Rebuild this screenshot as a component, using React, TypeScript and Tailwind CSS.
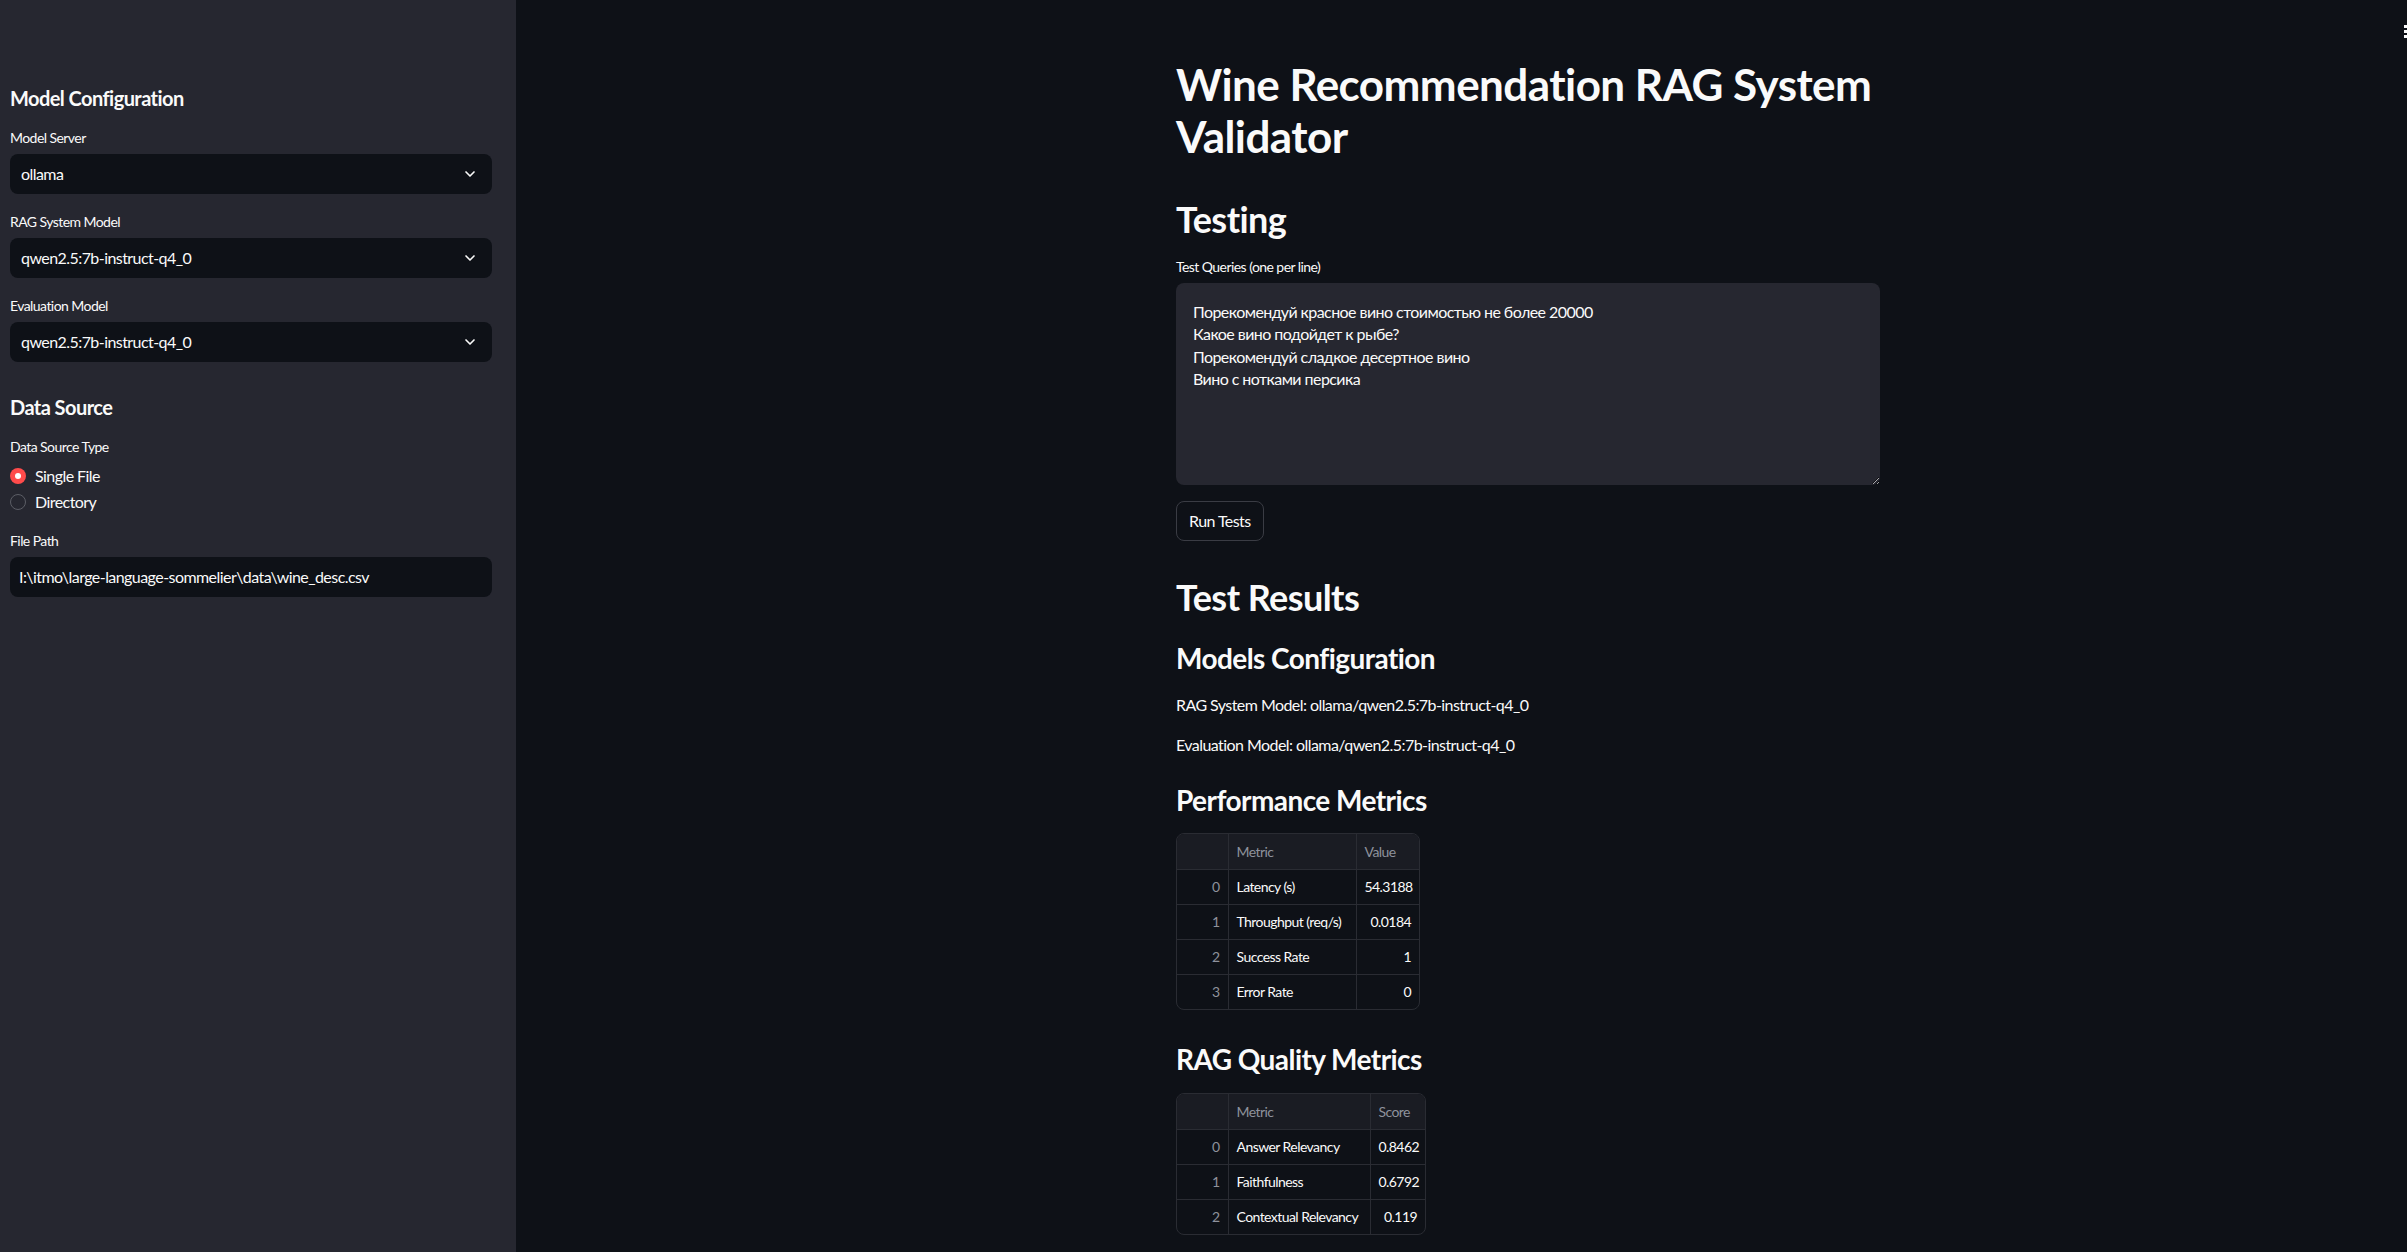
import { ChevronDown } from "lucide-react";

const QUERIES = [
  "Порекомендуй красное вино стоимостью не более 20000",
  "Какое вино подойдет к рыбе?",
  "Порекомендуй сладкое десертное вино",
  "Вино с нотками персика",
].join("\n");

const PERF = [
  ["Latency (s)", "54.3188"],
  ["Throughput (req/s)", "0.0184"],
  ["Success Rate", "1"],
  ["Error Rate", "0"],
];

const QUALITY = [
  ["Answer Relevancy", "0.8462"],
  ["Faithfulness", "0.6792"],
  ["Contextual Relevancy", "0.119"],
];

function Select({ label, value, first }: { label: string; value: string; first?: boolean }) {
  return (
    <div className={first ? "mt-4" : "mt-[18px]"}>
      <div className="text-[14px] leading-[20px] text-[#fafafa]">{label}</div>
      <div className="mt-[6px] flex h-[40px] items-center justify-between rounded-lg bg-[#0e1117] pl-[11px] pr-[14px]">
        <span className="text-[16px] text-[#fafafa]">{value}</span>
        <ChevronDown size={16} strokeWidth={2.5} className="text-[#fafafa]" />
      </div>
    </div>
  );
}

function DataTable({ head, rows, widths }: { head: string; rows: string[][]; widths: [number, number, number] }) {
  return (
    <div className="inline-block overflow-hidden rounded-lg border border-[#2a2c33]">
      <table className="table-fixed border-collapse text-[14px]" style={{ width: widths[0] + widths[1] + widths[2] }}>
        <colgroup>
          <col style={{ width: widths[0] }} />
          <col style={{ width: widths[1] }} />
          <col style={{ width: widths[2] }} />
        </colgroup>
        <thead>
          <tr className="h-[35px] bg-[#1a1c23]">
            <th className="border-r border-[#2a2c33]" />
            <th className="border-r border-[#2a2c33] px-2 text-left font-normal text-[#8e929c]">Metric</th>
            <th className="px-2 text-left font-normal text-[#8e929c]">{head}</th>
          </tr>
        </thead>
        <tbody>
          {rows.map((r, i) => (
            <tr key={r[0]} className="h-[35px] border-t border-[#2a2c33]">
              <td className="border-r border-[#2a2c33] px-2 text-right text-[#8e929c]">{i}</td>
              <td className="whitespace-nowrap border-r border-[#2a2c33] px-2 text-[#fafafa]">{r[0]}</td>
              <td className="whitespace-nowrap px-2 text-right text-[#fafafa]">{r[1]}</td>
            </tr>
          ))}
        </tbody>
      </table>
    </div>
  );
}

export default function App() {
  return (
    <div className="relative flex min-h-[1252px] overflow-hidden bg-[#0e1117] font-[Lato,sans-serif] tracking-[-0.035em] text-[#fafafa]">
      {/* Sidebar */}
      <aside className="w-[516px] shrink-0 bg-[#262730] pl-[10px] pr-[24px] pt-[84px]">
        <h2 className="text-[20px] font-bold leading-[28px]">Model Configuration</h2>
        <Select first label="Model Server" value="ollama" />
        <Select label="RAG System Model" value="qwen2.5:7b-instruct-q4_0" />
        <Select label="Evaluation Model" value="qwen2.5:7b-instruct-q4_0" />

        <h2 className="mt-[31px] text-[20px] font-bold leading-[28px]">Data Source</h2>
        <div className="mt-4 text-[14px] leading-[20px]">Data Source Type</div>
        <div className="mt-[6px]">
          <div className="flex h-[26px] items-center gap-[9px]">
            <span className="flex h-4 w-4 items-center justify-center rounded-full bg-[#ff4b4b]">
              <span className="h-[6px] w-[6px] rounded-full bg-white" />
            </span>
            <span className="text-[16px]">Single File</span>
          </div>
          <div className="flex h-[26px] items-center gap-[9px]">
            <span className="h-4 w-4 rounded-full border border-[#5c5e66]" />
            <span className="text-[16px]">Directory</span>
          </div>
        </div>
        <div className="mt-4 text-[14px] leading-[20px]">File Path</div>
        <div className="mt-[6px] flex h-[40px] items-center rounded-lg bg-[#0e1117] pl-[9px]">
          <span className="text-[16px]">I:\itmo\large-language-sommelier\data\wine_desc.csv</span>
        </div>
      </aside>

      {/* Main */}
      <main className="flex-1 pl-[660px] pt-[58px]">
        <div className="w-[704px]">
          <h1 className="text-[44px] font-bold leading-[52px]">Wine Recommendation RAG System Validator</h1>

          <h2 className="mt-[35px] text-[36px] font-bold leading-[44px]">Testing</h2>
          <div className="mt-4 text-[14px] leading-[20px]">Test Queries (one per line)</div>
          <textarea
            readOnly
            defaultValue={QUERIES}
            className="mt-[6px] block h-[202px] w-full resize-y rounded-lg bg-[#262730] px-[17px] py-[18px] text-[16px] leading-[22.4px] tracking-[-0.035em] text-[#fafafa] outline-none"
          />
          <button className="mt-4 h-[40px] rounded-lg border border-[#3a3c44] px-[12px] text-[16px] text-[#fafafa]">
            Run Tests
          </button>

          <h2 className="mt-[34px] text-[36px] font-bold leading-[44px]">Test Results</h2>
          <h3 className="mt-[21px] text-[28px] font-bold leading-[36px]">Models Configuration</h3>
          <p className="mt-[17px] text-[16px] leading-[24px]">RAG System Model: ollama/qwen2.5:7b-instruct-q4_0</p>
          <p className="mt-4 text-[16px] leading-[24px]">Evaluation Model: ollama/qwen2.5:7b-instruct-q4_0</p>

          <h3 className="mt-[25px] text-[28px] font-bold leading-[36px]">Performance Metrics</h3>
          <div className="mt-[15px]">
            <DataTable head="Value" rows={PERF} widths={[51, 128, 63]} />
          </div>

          <h3 className="mt-[25px] text-[28px] font-bold leading-[36px]">RAG Quality Metrics</h3>
          <div className="mt-[16px]">
            <DataTable head="Score" rows={QUALITY} widths={[51, 142, 55]} />
          </div>
        </div>
      </main>

      {/* clipped toolbar icon at the right edge */}
      <svg className="absolute right-0 top-[24px]" width="4" height="14" viewBox="0 0 4 14">
        <rect x="1" y="1" width="3" height="3" fill="#fafafa" />
        <rect x="1" y="6" width="3" height="3" fill="#fafafa" />
        <rect x="1" y="11" width="3" height="3" fill="#fafafa" />
      </svg>
    </div>
  );
}
